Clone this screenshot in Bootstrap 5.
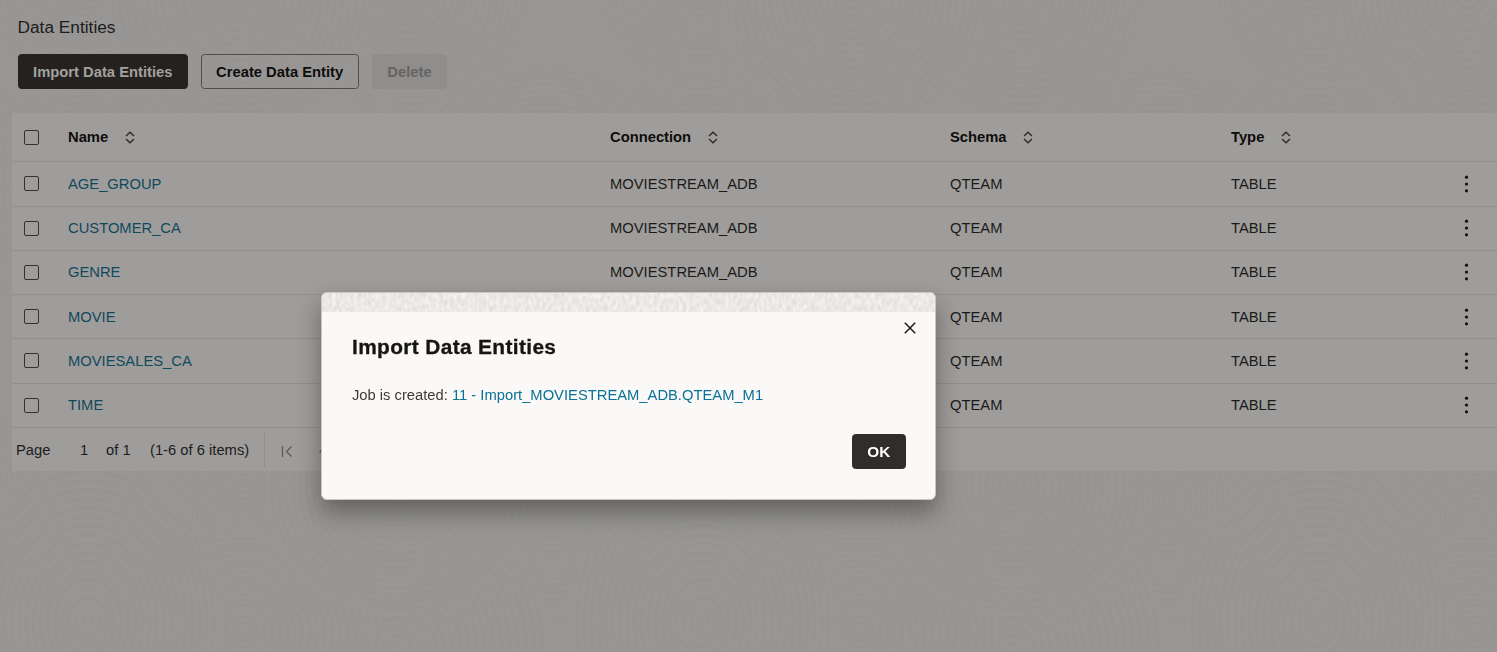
<!DOCTYPE html>
<html lang="en">
<head>
<meta charset="utf-8">
<meta name="viewport" content="width=device-width, initial-scale=1">
<title>Data Entities</title>
<link href="https://cdn.jsdelivr.net/npm/bootstrap@5.3.0/dist/css/bootstrap.min.css" rel="stylesheet">
<style>
body{font-family:"Liberation Sans",Arial,sans-serif;font-size:14.75px;line-height:20px;color:#1b1a19;background:#979694;height:652px;overflow:hidden}
.backdrop-art{position:absolute;inset:0;z-index:-1}
.page-title{font-size:17.3px;line-height:22px;font-weight:400;color:#1d1c1b;margin:0 0 16px}
.page-top{padding:16px 0 0 17.5px;height:113px}
.btn{font-family:inherit;font-size:14.75px;font-weight:700;line-height:20px;height:34.5px;border-radius:3.5px;padding:6.5px 14.6px 5px}
.btn-solid,.btn-solid:hover{background:#24211f;color:#a3a19f;border-color:#24211f}
.btn-line{border-color:#504e4c;color:#0e0d0c}
.btn-off,.btn-off:disabled{background:#8f8e8c;border-color:#8f8e8c;color:#666463;opacity:1}
.sheet{margin-left:12px;background:#9f9d9b;height:358px}
.entity-table{table-layout:fixed;width:1485px;margin:0;--bs-table-bg:transparent;--bs-table-color:#1b1a19;border-color:#918f8d}
.entity-table th,.entity-table td{padding:0 12px;height:44.3px;vertical-align:middle;border-bottom:1px solid #918f8d;white-space:nowrap;box-shadow:none}
.entity-table th{height:48.8px;color:#0e0d0c}
.entity-table td{padding-bottom:.4px}
.entity-table a{color:#11495c;text-decoration:none}
.tick{display:block;width:15px;height:15px;border:1.3px solid #343230;border-radius:2px}
.sort{margin-left:16.5px;vertical-align:-1.5px}
.pager{height:44px;padding:0 0 1px 4px;color:#1d1c1b}
.rule{width:1px;height:34px;background:#908e8c}
.modal-dialog{width:615px;max-width:none;margin:292px 0 0 321.4px}
.modal-content{height:207.6px;background:#fbf9f8;border:1px solid #c9c7c5;border-radius:6px;overflow:hidden;color:#3d3a38}
.modal-shell{border-radius:6px;box-shadow:0 12px 24px 0 rgba(20,18,18,.4)}
.band{display:block;width:100%;height:19px;flex:none}
.dialog-main{padding:23.2px 29.5px 0}
.dialog-title{font-size:20px;font-weight:700;line-height:24px;letter-spacing:.35px;color:#161513;margin:0 0 25.5px;width:max-content;transform:scaleX(1.043);transform-origin:0 50%;-webkit-text-stroke:.3px #161513}
.dialog-main a{color:#087196;text-decoration:none}
.dismiss{position:absolute;right:18.5px;top:28px;width:14px;height:14px;padding:0;border:0;background:none;display:block;line-height:0}
.btn-ok{background:#312d2a!important;border-color:#312d2a!important;color:#fff!important;font-size:15.3px}
</style>
</head>
<body>
<svg class="backdrop-art" width="1497" height="652" aria-hidden="true">
  <defs>
    <radialGradient id="ring" gradientUnits="userSpaceOnUse" cx="0" cy="0" r="7.5" spreadMethod="repeat">
      <stop offset="0" stop-color="#989795"/><stop offset=".5" stop-color="#979694"/><stop offset=".75" stop-color="#959492"/><stop offset="1" stop-color="#989795"/>
    </radialGradient>
    <circle id="disc" r="138" fill="url(#ring)"/>
    <g id="topTile">
      <use href="#disc" transform="translate(-70 190) scale(1.05 .9)"/>
      <use href="#disc" transform="translate(85 188) scale(.8 .9)"/>
      <use href="#disc" transform="translate(410 -8) scale(.85 .95)"/>
      <use href="#disc" transform="translate(85 -30) scale(.75 .9)"/>
      <use href="#disc" transform="translate(238 -5) scale(.95 1)"/>
    </g>
    <g id="lowTile">
      <use href="#disc" transform="translate(245 520) scale(.6 .8)"/>
      <use href="#disc" transform="translate(552 500) scale(.7 .9)"/>
      <use href="#disc" transform="translate(397 650) scale(1.1 1.15)"/>
      <use href="#disc" transform="translate(245 632) scale(1 .75)"/>
      <use href="#disc" transform="translate(397 486) scale(.95 .93)"/>
      <use href="#disc" transform="translate(88 622) scale(.95 1.2)"/>
    </g>
  </defs>
  <use href="#topTile" x="-615"/><use href="#topTile"/><use href="#topTile" x="615"/><use href="#topTile" x="1230"/>
  <use href="#lowTile" x="-615"/><use href="#lowTile"/><use href="#lowTile" x="615"/><use href="#lowTile" x="1230"/>
</svg>

<header class="page-top">
  <h1 class="page-title">Data Entities</h1>
  <div class="d-flex">
    <button class="btn btn-solid" style="margin-right:12.5px">Import Data Entities</button>
    <button class="btn btn-line" style="margin-right:13px">Create Data Entity</button>
    <button class="btn btn-off" disabled>Delete</button>
  </div>
</header>

<main class="sheet">
  <table class="table entity-table">
    <colgroup><col style="width:44px"><col style="width:542px"><col style="width:340px"><col style="width:281px"><col></colgroup>
    <thead><tr id="head"></tr></thead>
    <tbody id="rows"></tbody>
  </table>
  <div class="pager d-flex align-items-center">
    <span style="width:64px">Page</span><span style="width:26px">1</span><span style="width:44px">of 1</span><span style="width:114px">(1-6 of 6 items)</span>
    <span class="rule"></span>
    <svg width="60" height="16" viewBox="0 0 60 16" class="mt-1" fill="none" stroke="#5d5b59" stroke-width="1.3" style="margin-left:13px"><path d="M4.5 2v11M13.5 2.5 8.5 7.5l5 5M46 4l-4 3.5 4 3.5"/></svg>
  </div>
</main>

<div class="modal show d-block" tabindex="-1" role="dialog">
  <div class="modal-dialog"><div class="modal-shell"><div class="modal-content">
    <svg class="band" preserveAspectRatio="none" aria-hidden="true">
      <filter id="grain" x="0" y="0" width="100%" height="100%" color-interpolation-filters="sRGB"><feTurbulence type="fractalNoise" baseFrequency=".28 .16" numOctaves="2" seed="4"/><feColorMatrix values=".14 0 0 0 .85  .14 0 0 0 .845  .14 0 0 0 .84  0 0 0 0 1"/></filter>
      <rect width="100%" height="19" filter="url(#grain)"/>
    </svg>
    <button class="dismiss" aria-label="Close"><svg width="14" height="14" viewBox="0 0 14 14" stroke="#1b1918" stroke-width="1.5"><path d="m1.8 1.8 10.4 10.4M12.2 1.8 1.8 12.2"/></svg></button>
    <div class="dialog-main">
      <h2 class="dialog-title">Import Data Entities</h2>
      <p class="mb-0">Job is created: <a href="#">11 - Import_MOVIESTREAM_ADB.QTEAM_M1</a></p>
      <div class="text-end" style="margin-top:29.4px"><button class="btn btn-ok">OK</button></div>
    </div>
  </div></div></div>
</div>

<script src="https://cdn.jsdelivr.net/npm/bootstrap@5.3.0/dist/js/bootstrap.bundle.min.js"></script>
<script>
const sort = '<svg class="sort" width="10" height="13" viewBox="0 0 10 13" fill="none" stroke="#2a2826" stroke-width="1.3"><path d="M1 5 5 1.2 9 5M1 8l4 3.8L9 8"/></svg>';
const tick = '<span class="tick"></span>';
document.getElementById('head').innerHTML = `<th>${tick}</th>` + ['Name','Connection','Schema','Type'].map(t => `<th>${t}${sort}</th>`).join('');
const dots = '<svg width="5" height="18" viewBox="0 0 5 18" fill="#111" style="margin-right:16.5px"><circle cx="2.5" cy="2.2" r="1.6"/><circle cx="2.5" cy="9" r="1.6"/><circle cx="2.5" cy="15.8" r="1.6"/></svg>';
document.getElementById('rows').innerHTML = ['AGE_GROUP','CUSTOMER_CA','GENRE','MOVIE','MOVIESALES_CA','TIME'].map(n =>
  `<tr><td>${tick}</td><td><a href="#">${n}</a></td><td>MOVIESTREAM_ADB</td><td>QTEAM</td><td><div class="d-flex justify-content-between align-items-center">TABLE${dots}</div></td></tr>`).join('');
</script>
</body>
</html>
